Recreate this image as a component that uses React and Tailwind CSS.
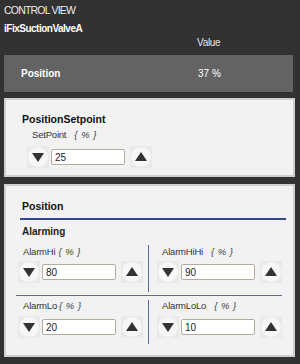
const font = { fontFamily: '"Liberation Sans", Arial, sans-serif' }

const Arrow = ({ dir }) => (
  <button className="w-[22px] h-[22px] bg-[#e9e9e9] flex items-center justify-center shrink-0">
    <svg width="22" height="22" viewBox="0 0 22 22">
      <circle cx="11" cy="11" r="10" fill="#f7f7f7" />
      {dir === 'down'
        ? <polygon points="5,7 17,7 11,16" fill="#333" />
        : <polygon points="5,15 17,15 11,6" fill="#333" />}
    </svg>
  </button>
)

const Stepper = ({ value }) => (
  <div className="flex items-center">
    <Arrow dir="down" />
    <input
      readOnly
      value={value}
      className="ml-[2px] w-[74px] h-[16px] bg-white border border-[#b3ab9e] rounded-[2px] px-[3px] text-[10px] text-[#222] outline-none"
      style={font}
    />
    <div className="ml-[5px]">
      <Arrow dir="up" />
    </div>
  </div>
)

const Label = ({ name, gap = 'ml-[3px]' }) => (
  <div className="h-[12px] leading-[12px] text-[9.5px] text-[#333] flex tracking-[-0.2px]">
    <span>{name}</span>
    <span className={`${gap} italic text-[#444] tracking-[0.5px]`}>{'{ % }'}</span>
  </div>
)

export default function App() {
  return (
    <div className="w-[300px] h-[364px] bg-[#323232] overflow-hidden px-[4px] pt-[4px]" style={font}>
      <div className="h-[12px] leading-[12px] text-[10.5px] text-[#ececec] tracking-[-0.8px]">CONTROL VIEW</div>
      <div className="mt-[7px] h-[12px] leading-[12px] text-[10px] font-bold text-white tracking-[-0.5px]">iFixSuctionValveA</div>
      <div className="mt-[2px] flex pl-[17px] h-[12px] leading-[12px] text-[10px] text-[#e6e6e6]">
        <div className="w-[176px]" />
        <div className="tracking-[-0.3px]">Value</div>
      </div>

      {/* header row */}
      <div className="mt-[6px] mr-[3px] h-[37px] bg-[#636363] flex items-center pl-[17px] text-[10px] text-white">
        <div className="w-[177px] font-bold">Position</div>
        <div>37 %</div>
      </div>

      {/* setpoint card */}
      <div className="mt-[6px] mr-[1px] h-[79px] border-2 border-[#cfcfcf] bg-[#f2f2f2] pl-[16px] pt-[12px]">
        <div className="h-[14px] leading-[14px] text-[10.5px] font-bold text-[#111]">PositionSetpoint</div>
        <div className="mt-[3px] ml-[10px]">
          <Label name="SetPoint" gap="ml-[8px]" />
        </div>
        <div className="mt-[5px] ml-[5px]">
          <Stepper value="25" />
        </div>
      </div>

      {/* alarming card */}
      <div className="mt-[7px] mr-[1px] h-[173px] border-2 border-[#cfcfcf] bg-[#f2f2f2] pl-[14px] pr-[7px] pt-[13px]">
        <div className="pl-[2px] h-[14px] leading-[14px] text-[10.5px] font-bold text-[#111]">Position</div>
        <div className="mt-[5px] h-[2px] bg-[#34468c]" />
        <div className="mt-[6px] pl-[2px] h-[12px] leading-[12px] text-[10px] font-bold text-[#222]">Alarming</div>

        <div className="mt-[7px] ml-[-4px] w-[266px]">
          <div className="flex pb-[3px] border-b border-[#5b6aa6]">
            <div className="w-[135px] border-r border-[#5b6aa6] pl-[2px] pt-[1px] pb-[9px]">
              <div className="ml-[5px]"><Label name="AlarmHi" /></div>
              <div className="mt-[3px]"><Stepper value="80" /></div>
            </div>
            <div className="pl-[8px] pt-[1px]">
              <div className="ml-[5px]"><Label name="AlarmHiHi" gap="ml-[8px]" /></div>
              <div className="mt-[3px]"><Stepper value="90" /></div>
            </div>
          </div>
          <div className="flex pt-[4px]">
            <div className="w-[135px] border-r border-[#5b6aa6] pl-[2px] pb-[6px]">
              <div className="ml-[5px]"><Label name="AlarmLo" gap="ml-[2px]" /></div>
              <div className="mt-[4px]"><Stepper value="20" /></div>
            </div>
            <div className="pl-[8px]">
              <div className="ml-[5px]"><Label name="AlarmLoLo" gap="ml-[8px]" /></div>
              <div className="mt-[4px]"><Stepper value="10" /></div>
            </div>
          </div>
        </div>
      </div>
    </div>
  )
}
